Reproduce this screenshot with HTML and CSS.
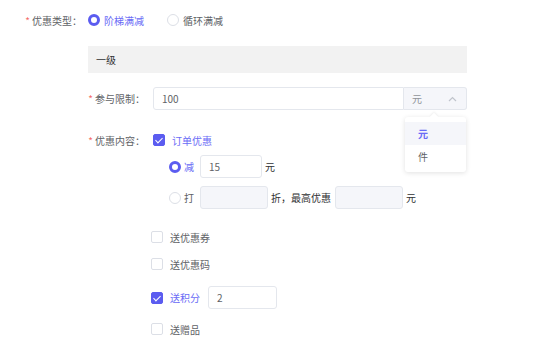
FILE: index.html
```html
<!DOCTYPE html>
<html lang="zh-CN">
<head>
    <meta charset="UTF-8">
    <meta name="viewport" content="width=device-width, initial-scale=1.0">
    <title>满减设置</title>
    <link rel="stylesheet" href="styles.css">
</head>
<body>
    <div class="form">
        <div class="row row-type">
            <div class="label label-wide"><span class="star">*</span>优惠类型：</div>
            <label class="radio checked"><span class="dot"></span>阶梯满减</label>
            <label class="radio second"><span class="dot"></span>循环满减</label>
        </div>

        <div class="level">一级</div>

        <div class="row row-limit">
            <div class="label"><span class="star">*</span>参与限制：</div>
            <div class="input-group">
                <input type="text" class="input limit-input" value="100">
                <div class="select">
                    <span>元</span>
                    <svg class="chevron" width="9" height="6" viewBox="0 0 9 6">
                        <path d="M1 5 L4.5 1.5 L8 5" fill="none" stroke="#c0c4cc" stroke-width="1.2"/>
                    </svg>
                </div>
                <div class="dropdown">
                    <div class="option active">元</div>
                    <div class="option">件</div>
                </div>
            </div>
        </div>

        <div class="row row-content">
            <div class="label"><span class="star">*</span>优惠内容：</div>
            <label class="checkbox checked"><span class="box"></span>订单优惠</label>
        </div>

        <div class="row sub-row sub-first">
            <label class="radio checked"><span class="dot"></span>减</label>
            <input type="text" class="input small-input" value="15">
            <span class="unit">元</span>
        </div>

        <div class="row sub-row sub-second">
            <label class="radio"><span class="dot"></span>打</label>
            <input type="text" class="input small-input disabled" disabled>
            <span class="unit">折，最高优惠</span>
            <input type="text" class="input small-input disabled" disabled>
            <span class="unit">元</span>
        </div>

        <div class="gifts">
            <label class="checkbox"><span class="box"></span>送优惠券</label>
            <label class="checkbox"><span class="box"></span>送优惠码</label>
            <div class="row gift-points">
                <label class="checkbox checked"><span class="box"></span>送积分</label>
                <input type="text" class="input points-input" value="2">
            </div>
            <label class="checkbox"><span class="box"></span>送赠品</label>
        </div>
    </div>
</body>
</html>
```

FILE: styles.css
```css
body {
    margin: 0;
    font-family: "Noto Sans CJK SC", "Noto Sans", sans-serif;
    font-size: 10px;
    color: #606266;
    background-color: white;
}
.form {
    padding-top: 10px;
    width: 554px;
}
.row {
    display: flex;
    align-items: center;
}
.label {
    width: 65px;
    padding-right: 8px;
    box-sizing: border-box;
    text-align: right;
    white-space: nowrap;
    margin-left: 88px;
}
.label-wide {
    width: 88px;
    padding-right: 6px;
    margin-left: 0;
}
.star {
    color: #f56c6c;
    margin-right: 2px;
}
.row-type {
    height: 20px;
}
.radio {
    display: flex;
    align-items: center;
    color: #606266;
}
.radio .dot {
    width: 12px;
    height: 12px;
    border: 1px solid #dcdfe6;
    border-radius: 50%;
    box-sizing: border-box;
    margin-right: 4px;
    background-color: white;
}
.radio.checked {
    color: #6b6cf6;
}
.radio.checked .dot {
    border: 3px solid #5b5cf0;
}
.radio.second {
    margin-left: 23px;
}
.level {
    margin: 16px 0 0 88px;
    width: 379px;
    height: 27px;
    line-height: 27px;
    padding-left: 8px;
    box-sizing: border-box;
    background-color: #f2f2f2;
    color: #303133;
}
.row-limit {
    margin-top: 14px;
}
.input-group {
    position: relative;
    display: flex;
    width: 314px;
    height: 23px;
}
.input {
    height: 23px;
    border: 1px solid #e4e7ed;
    border-radius: 3px;
    box-sizing: border-box;
    padding: 0 8px;
    font-family: inherit;
    font-size: 10px;
    color: #606266;
    outline: none;
    background-color: white;
}
.limit-input {
    width: 251px;
    border-radius: 3px 0 0 3px;
}
.select {
    width: 63px;
    height: 23px;
    box-sizing: border-box;
    border: 1px solid #e4e7ed;
    border-left: none;
    border-radius: 0 3px 3px 0;
    background-color: #f5f6fa;
    display: flex;
    align-items: center;
    justify-content: space-between;
    padding: 0 9px 0 8px;
    color: #909399;
}
.dropdown {
    position: absolute;
    top: 30px;
    left: 252px;
    width: 61px;
    padding: 5px 0 4px;
    background-color: white;
    border-radius: 3px;
    box-shadow: 0 1px 5px rgba(0, 0, 0, 0.12);
}
.dropdown::before {
    content: "";
    position: absolute;
    top: -3px;
    left: 26px;
    width: 6px;
    height: 6px;
    background-color: white;
    transform: rotate(45deg);
    box-shadow: -1px -1px 2px rgba(0, 0, 0, 0.05);
}
.option {
    position: relative;
    height: 23px;
    line-height: 23px;
    padding-left: 13px;
    color: #606266;
}
.option.active {
    background-color: #f5f6fa;
    color: #6b6cf6;
    font-weight: bold;
}
.row-content {
    margin-top: 20px;
    height: 20px;
}
.checkbox {
    display: flex;
    align-items: center;
    height: 20px;
    color: #606266;
}
.checkbox .box {
    width: 12px;
    height: 12px;
    border: 1px solid #dcdfe6;
    border-radius: 2px;
    box-sizing: border-box;
    margin-right: 7px;
    position: relative;
}
.checkbox.checked {
    color: #6b6cf6;
}
.checkbox.checked .box {
    background-color: #5b5cf0;
    border-color: #5b5cf0;
}
.checkbox.checked .box::after {
    content: "";
    position: absolute;
    left: 3px;
    top: 1px;
    width: 3px;
    height: 6px;
    border: solid white;
    border-width: 0 1.5px 1.5px 0;
    transform: rotate(45deg);
}
.sub-row {
    padding-left: 169px;
}
.sub-first {
    margin-top: 5px;
}
.sub-second {
    margin-top: 8px;
}
.sub-row .radio .dot {
    margin-right: 3px;
}
.small-input {
    width: 62px;
    margin-left: 6px;
}
.sub-second .small-input {
    width: 68px;
}
.sub-second .small-input + .unit + .small-input {
    margin-left: 4px;
}
.disabled {
    background-color: #f5f6fa;
}
.unit {
    margin-left: 3px;
    color: #303133;
}
.gifts {
    margin-top: 18px;
    padding-left: 151px;
    display: flex;
    flex-direction: column;
    align-items: flex-start;
}
.gifts > .checkbox + .checkbox {
    margin-top: 7px;
}
.gift-points {
    margin-top: 12px;
}
.gift-points + .checkbox {
    margin-top: 10px;
}
.points-input {
    width: 69px;
    margin-left: 8px;
}
```
